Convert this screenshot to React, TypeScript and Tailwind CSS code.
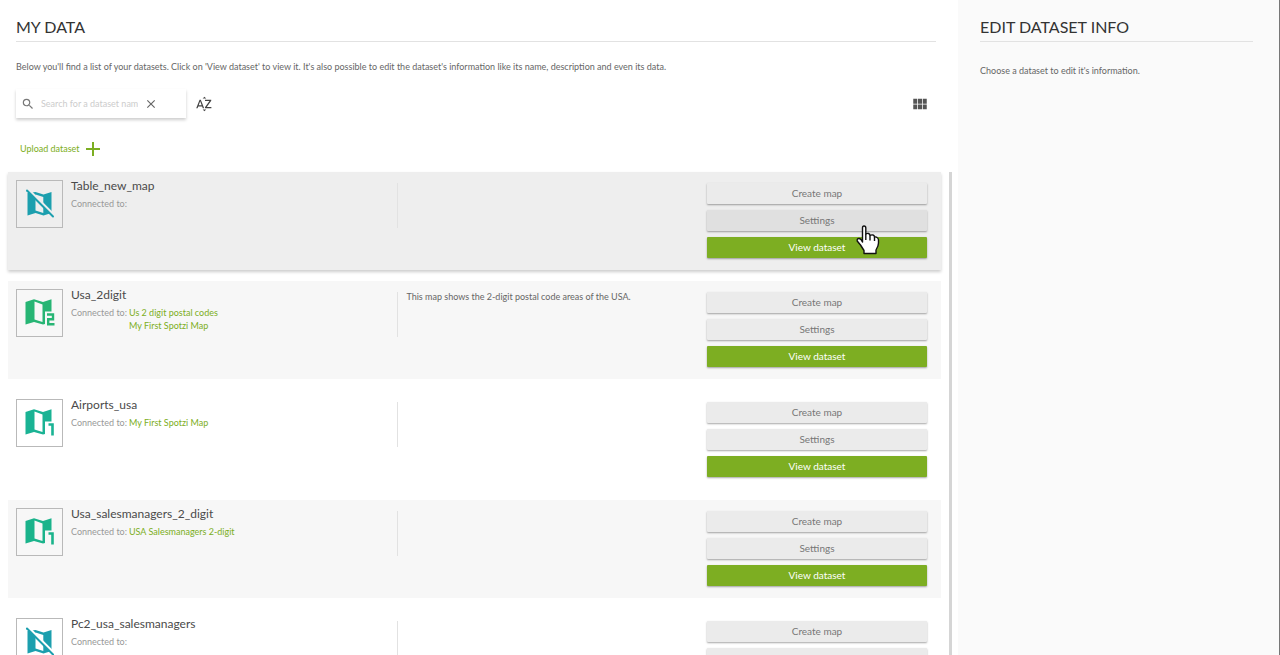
import React from 'react';
import { MdSearch, MdClose, MdAdd, MdViewModule, MdSortByAlpha } from 'react-icons/md';

type Dataset = {
  name: string;
  maps: string[];
  description?: string;
  color: string;
};

const datasets: Dataset[] = [
  { name: 'Table_new_map', maps: [], color: 'text-[#1c9fae]' },
  {
    name: 'Usa_2digit',
    maps: ['Us 2 digit postal codes', 'My First Spotzi Map'],
    description: 'This map shows the 2-digit postal code areas of the USA.',
    color: 'text-[#27b574]',
  },
  { name: 'Airports_usa', maps: ['My First Spotzi Map'], color: 'text-[#1ab394]' },
  { name: 'Usa_salesmanagers_2_digit', maps: ['USA Salesmanagers 2-digit'], color: 'text-[#1ab38b]' },
  { name: 'Pc2_usa_salesmanagers', maps: [], color: 'text-[#1c9fae]' },
];

const MapIcon = ({ count }: { count: number }) => {
  const maskId = React.useId();

  if (count === 0) {
    return (
      <svg viewBox="0 0 30 30" className="w-[30px] h-[30px]" aria-hidden="true">
        <mask id={maskId}>
          <rect width="30" height="30" fill="#fff" />
          <path d="M2 -1L31 28" stroke="#000" strokeWidth="2.4" />
        </mask>
        <path
          mask={`url(#${maskId})`}
          fill="currentColor"
          fillRule="evenodd"
          d="M2.5 4L10.5 3L18.5 5.500L26.500 3V24L18.500 26.500L10.500 24L2.500 26.500ZM10.500 5.500V21.500L18.300 24V8Z"
        />
        <path d="M2 1.500L28 27.500" stroke="currentColor" strokeWidth="2" strokeLinecap="round" />
      </svg>
    );
  }
  return (
    <svg viewBox="0 0 30 30" className="w-[30px] h-[30px]" aria-hidden="true">
      <path
        fill="currentColor"
        fillRule="evenodd"
        d="M0.500 4L9 1.200L18 4L26.500 1.200V13.500H20V26L18 26.500L9 24L0.500 26.500ZM9.500 3.500V21.500L17.500 24V6.500Z"
      />
      {count === 1 ? (
        <path d="M23.500 16.500H27.500V27.500" fill="none" stroke="currentColor" strokeWidth="2.600" />
      ) : (
        <path d="M22 16.500H28V21.300H23.200V26.200H29.500" fill="none" stroke="currentColor" strokeWidth="2.400" />
      )}
    </svg>
  );
};

const HandPointer = () => (
  <svg
    viewBox="0 0 24 30"
    className="absolute left-[149px] top-[42px] w-6 h-[30px] pointer-events-none"
    fill="#fff"
    stroke="#111"
    strokeWidth="1.400"
    strokeLinejoin="round"
    aria-hidden="true"
  >
    <path d="M6.500 17V3Q6.500 1 8 1Q9.800 1 9.800 3V9Q11 8 12.500 8.500Q14 9 14 10.500Q15.500 9.500 17 10Q18.500 10.500 18.500 12Q20 11.500 21 12.500Q22.500 13.500 22.500 15V18Q22.500 21 20 25V28.500H8V25.500L4.500 20L1.200 16Q0.800 13.500 3 13.500Q5 13.500 6.500 17Z" />
    <path d="M9.800 9V15M14 10.500V15.500M18.500 12V16" fill="none" />
  </svg>
);

const buttonBase = 'h-[21px] w-full rounded-[1px] text-[10px] leading-[21px] shadow-[0_1px_2px_rgba(0,0,0,0.35)]';

const DatasetRow = ({ dataset, index }: { dataset: Dataset; index: number }) => {
  const hovered = index === 0;

  return (
    <li
      className={`flex h-[98px] shrink-0 px-2 pt-2 odd:mb-[11px] even:mb-3 ${
        hovered ? 'bg-[#eeeeee] shadow-[0_2px_3px_rgba(0,0,0,0.2)]' : index % 2 ? 'bg-[#f7f7f7]' : ''
      }`}
    >
      <div className="flex flex-[382] min-w-0">
        <div
          className={`flex items-center justify-center w-[47px] h-12 shrink-0 border border-[#b9b9b9] ${dataset.color}`}
        >
          <MapIcon count={dataset.maps.length} />
        </div>
        <div className="ml-2">
          <h2 className="text-[12px] leading-3 text-[#4a4a4a]">{dataset.name}</h2>
          <div className="mt-[5px] flex gap-[2px] text-[9px] leading-[13px]">
            <span className="text-[#999]">Connected to:</span>
            <div className="flex flex-col">
              {dataset.maps.map((map) => (
                <a key={map} href="#" className="text-[#7cae22]">
                  {map}
                </a>
              ))}
            </div>
          </div>
        </div>
      </div>
      <div className="mt-[3px] h-[45px] flex-[301] min-w-0 border-l border-[#e2e2e2] pl-2">
        <p className="text-[9px] leading-none text-[#666]">{dataset.description}</p>
      </div>
      <div className="relative mt-[3px] mr-[6px] flex w-[220px] flex-col gap-[6px]">
        <button className={`${buttonBase} bg-[#ebebeb] text-[#777]`}>Create map</button>
        <button className={`${buttonBase} text-[#777] ${hovered ? 'bg-[#e0e0e0]' : 'bg-[#ebebeb]'}`}>Settings</button>
        <button className={`${buttonBase} bg-[#7dae22] text-white`}>View dataset</button>
        {hovered && <HandPointer />}
      </div>
    </li>
  );
};

export default function App() {
  return (
    <div className="flex h-screen overflow-hidden bg-white font-['Lato',sans-serif]">
      <main className="flex flex-1 min-w-0 flex-col pl-2 pr-[6px]">
        <div className="pl-2 pr-4">
          <h1 className="mt-[15px] border-b border-[#e2e2e2] pb-[2px] text-[16px] leading-6 text-[#333]">MY DATA</h1>
          <p className="mt-[18px] text-[9px] leading-[14px] text-[#666]">
            Below you'll find a list of your datasets. Click on 'View dataset' to view it. It's also possible to edit the
            dataset's information like its name, description and even its data.
          </p>
          <div className="mt-[15px] flex items-center">
            <div className="flex h-[29px] w-[170px] items-center pl-[5px] shadow-[0_2px_3px_rgba(0,0,0,0.2)]">
              <MdSearch className="h-[14px] w-[14px] shrink-0 text-[#777]" />
              <input
                aria-label="Search datasets"
                placeholder="Search for a dataset name"
                className="ml-[6px] w-[97px] text-[9px] outline-none placeholder:text-[#ccc]"
              />
              <button aria-label="Clear search" className="ml-[6px]">
                <MdClose className="h-[14px] w-[14px] text-[#666]" />
              </button>
            </div>
            <button aria-label="Sort by name" className="ml-[9px]">
              <MdSortByAlpha className="h-[18px] w-[18px] text-[#444]" />
            </button>
            <button aria-label="Grid view" className="ml-auto mr-[7px]">
              <MdViewModule className="h-[18px] w-[18px] text-[#555]" />
            </button>
          </div>
          <button className="mt-[21px] ml-1 flex h-5 items-center gap-px text-[9px] text-[#7cae22]">
            Upload dataset
            <MdAdd className="h-6 w-6" />
          </button>
        </div>
        <div className="mt-[13px] flex min-h-0 flex-1 gap-2">
          <ul className="flex flex-1 min-w-0 flex-col">
            {datasets.map((dataset, index) => (
              <DatasetRow key={dataset.name} dataset={dataset} index={index} />
            ))}
          </ul>
          <div className="w-[3px] bg-[#d5d5d5]" />
        </div>
      </main>
      <aside className="w-[322px] shrink-0 border-r border-[#777] bg-[#fafafa] pl-[22px] pr-[26px]">
        <h1 className="mt-[15px] border-b border-[#e2e2e2] pb-[2px] text-[16px] leading-6 text-[#333]">
          EDIT DATASET INFO
        </h1>
        <p className="mt-[22px] text-[9px] leading-[14px] text-[#666]">Choose a dataset to edit it's information.</p>
      </aside>
    </div>
  );
}
